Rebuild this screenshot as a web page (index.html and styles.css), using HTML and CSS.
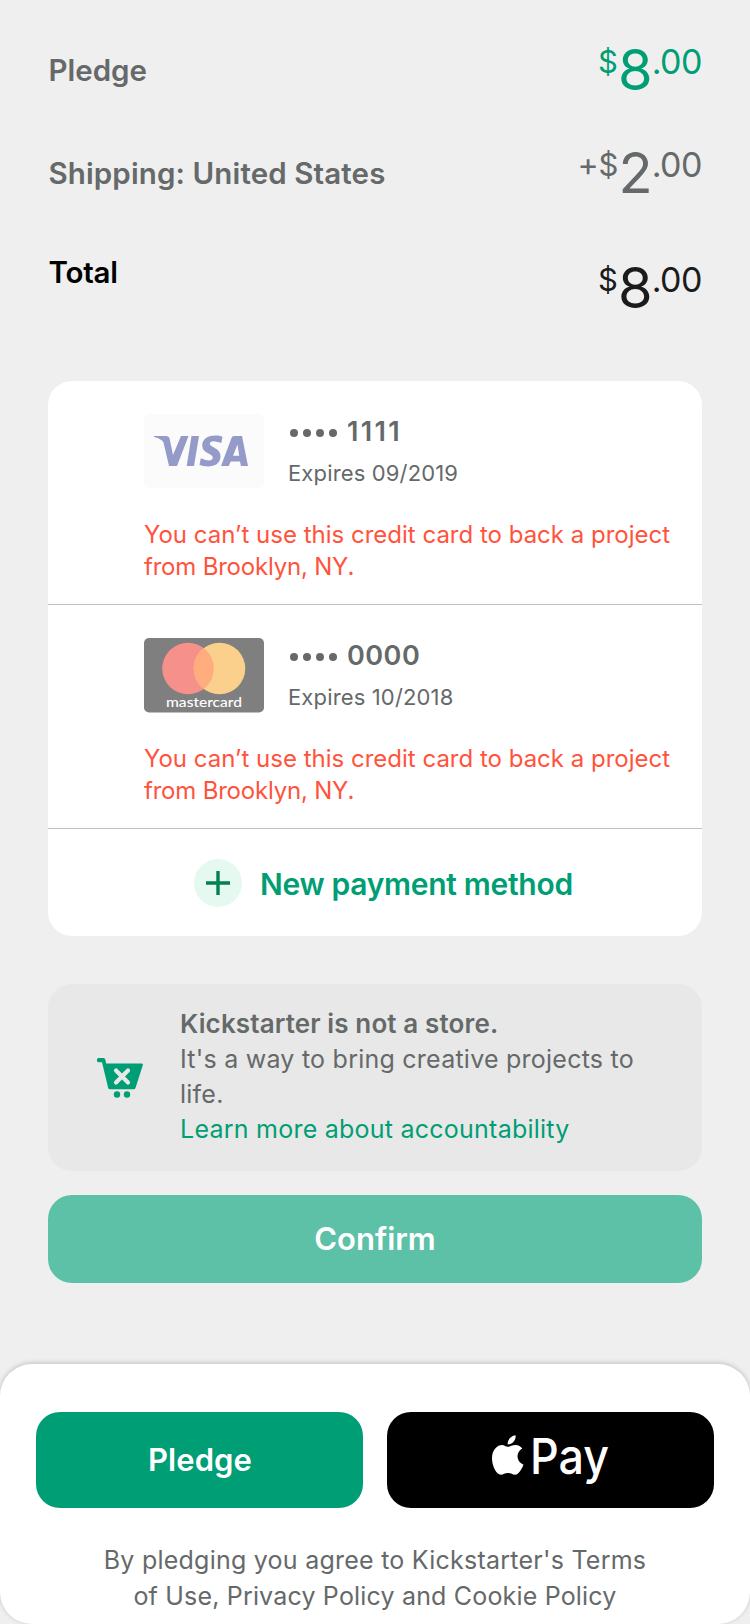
FILE: index.html
```html
<!DOCTYPE html>
<html lang="en">
<head>
<meta charset="utf-8">
<title>Pledge</title>
<link rel="stylesheet" href="styles.css">
</head>
<body>
<main class="content">
  <section class="summary">
    <div class="summary-row">
      <span class="label">Pledge</span>
      <span class="amount green"><span class="small cur">$</span><span class="big">8</span><span class="small dec">.00</span></span>
    </div>
    <div class="summary-row">
      <span class="label label-ship">Shipping: United States</span>
      <span class="amount"><span class="small plus">+</span><span class="small cur">$</span><span class="big">2</span><span class="small dec">.00</span></span>
    </div>
    <div class="summary-row total">
      <span class="label label-total">Total</span>
      <span class="amount black"><span class="small cur">$</span><span class="big">8</span><span class="small dec">.00</span></span>
    </div>
  </section>

  <section class="cards">
    <article class="card">
      <div class="card-head">
        <svg class="brand" viewBox="0 0 120 75">
          <rect width="120" height="74" rx="5" fill="#fbfbfb"/>
          <g fill="#959bc9">
            <path d="M10 22H22.500Q25 22 25.600 24.500L29 41L37 22H44.500L33 52H25L19.500 28.500Q18 25 10 23Z"/>
            <path d="M47.500 22H55L50 52H42.700Z"/>
            <path d="M78.500 22.800L77.300 29Q66 25.200 65.800 30C65.800 33 76.500 34 76.500 42C76.500 54 62 53.500 55.500 50.800L56.800 44.300Q68.500 49 68.800 43.500C68.800 39.500 58.200 39.500 58.200 31.500C58.200 21 72 20 78.500 22.800Z"/>
            <path fill-rule="evenodd" d="M90 22H98L104 52H97L96 47.500H86.700L84.800 52H77L87.500 24Q88.200 22 90 22ZM93.500 30.500L89 41.800H95.200Z"/>
          </g>
        </svg>
        <div class="card-info">
          <div class="number"><i></i><i></i><i></i><i></i><span class="ones">1111</span></div>
          <div class="expires">Expires 09/2019</div>
        </div>
      </div>
      <p class="error">You can’t use this credit card to back a project<br><span class="error-place">from Brooklyn, NY.</span></p>
    </article>
    <article class="card">
      <div class="card-head">
        <svg class="brand" viewBox="0 0 120 75">
          <rect width="120" height="74.500" rx="5" fill="#7f7f7f"/>
          <circle cx="44" cy="30.500" r="25.800" fill="#f6908b"/>
          <circle cx="75.500" cy="30.500" r="25.800" fill="#fbcf8c"/>
          <path d="M59.750 10A25.800 25.800 0 0 1 59.750 51A25.800 25.800 0 0 1 59.750 10Z" fill="#ffad7e"/>
          <text x="22" y="69" textLength="76" lengthAdjust="spacingAndGlyphs" class="mc">mastercard</text>
        </svg>
        <div class="card-info">
          <div class="number"><i></i><i></i><i></i><i></i><span>0000</span></div>
          <div class="expires">Expires 10/2018</div>
        </div>
      </div>
      <p class="error">You can’t use this credit card to back a project<br><span class="error-place">from Brooklyn, NY.</span></p>
    </article>
    <div class="add">
      <svg class="add-icon" viewBox="0 0 48 48">
        <circle cx="24" cy="24" r="24" fill="#e5f9f1"/>
        <path d="M24 12V36M12 24H36" stroke="#037f56" stroke-width="3.400"/>
      </svg>
      <span class="add-label">New payment method</span>
    </div>
  </section>

  <section class="notice">
    <svg class="cart" viewBox="0 0 46 40">
      <path fill="#009e74" d="M1.900 0H6.500Q7.900 0 8.300 1.500L9.200 5.500H44.500Q46.500 5.700 45.700 7.500L38.500 30Q38 31.300 36.500 31.300H13Q11.500 31.300 11.200 30L5 4.200H1.900A2.100 2.100 0 0 1 1.900 0Z"/>
      <circle cx="20" cy="36.500" r="3.200" fill="#009e74"/>
      <circle cx="30" cy="36.500" r="3.200" fill="#009e74"/>
      <path d="M19 12.500L31 24.500M31 12.500L19 24.500" stroke="#e8e8e8" stroke-width="4.200" stroke-linecap="round"/>
    </svg>
    <div class="notice-text">
      <strong>Kickstarter is not a store.</strong><br>
      It's a way to bring creative projects to<br>life.<br>
      <a>Learn more about accountability</a>
    </div>
  </section>

  <div class="button confirm">Confirm</div>
</main>

<footer class="sheet">
  <div class="buttons">
    <div class="button pledge">Pledge</div>
    <div class="button apple">
      <svg width="130" height="80" viewBox="0 -12 130 80">
        <path fill="#fff" d="M17.500 13.800C19.800 13.800 22.200 11.900 25.500 11.900C28.500 11.900 31 13.500 32.300 15.500C25.200 19.600 26.400 28.800 33.500 31.500C32.300 35.200 28.600 41.700 25.100 41.700C22.300 41.700 21.300 40 17.900 40C14.500 40 13.500 41.700 10.900 41.700C6.200 41.700 2 32.500 2 25.500C2 16.500 7.500 12 12 12C14.500 12 16 13.800 17.500 13.800ZM17.700 11.500C17.300 6.500 21.500 2.700 25.600 2.300C26.100 7.200 22.300 11.400 17.700 11.500Z"/>
        <text x="40" y="41" class="pay" textLength="79" lengthAdjust="spacingAndGlyphs">Pay</text>
      </svg>
    </div>
  </div>
  <p class="legal"><span class="legal-1">By pledging you agree to Kickstarter's Terms</span><br><span class="legal-2">of Use, Privacy Policy and Cookie Policy</span></p>
</footer>
</body>
</html>
```
FILE: styles.css
```css
* { box-sizing: border-box; }
body {
  margin: 0;
  width: 750px;
  height: 1624px;
  overflow: hidden;
  display: flex;
  flex-direction: column;
  justify-content: space-between;
  background: #efefef;
  color: #656969;
  font-family: Inter, "Liberation Sans", sans-serif;
  white-space: nowrap;
}
.content { padding: 39px 48px 0; }

.summary { display: flex; flex-direction: column; gap: 43px; }
.summary-row { display: flex; justify-content: space-between; align-items: center; height: 60px; }
.summary-row.total { align-items: flex-start; margin-top: 12px; }
.label { font-size: 29.5px; line-height: 36px; font-weight: 600; margin: 1px 0 0 0.5px; letter-spacing: 0; }
.label-ship { letter-spacing: 0.12px; }
.label-total { color: #000; margin-top: -3px; letter-spacing: -0.2px; }
.amount { display: flex; align-items: flex-start; height: 60px; }
.big { font-size: 56px; line-height: 60px; letter-spacing: -1px; margin-top: 1px; }
.small { font-size: 34px; line-height: 36px; margin-top: 5px; }
.plus { font-size: 32px; }
.cur { font-size: 31px; margin-top: 5px; }
.dec { letter-spacing: -0.5px; }
.green { color: #009e74; }
.black { color: #1b1b1b; }

.cards { margin-top: 64px; height: 555px; border-radius: 24px; background: #fff; }
.card { height: 224px; padding: 33px 0 0 96px; border-bottom: 1px solid #bfbfbf; }
.card-head { display: flex; gap: 24px; height: 75px; }
.brand { width: 120px; height: 75px; }
.mc { font: 500 14px Lato, sans-serif; fill: #fff; }
.number { display: flex; align-items: center; height: 36px; margin-left: -1px; font-size: 27px; line-height: 34px; font-weight: 600; }
.number i { width: 8px; height: 8px; border-radius: 4px; background: #656969; margin: 2px 2.500px 0; }
.number span { margin-left: 8px; letter-spacing: 0.5px; }
.number .ones { letter-spacing: 2.3px; }
.expires { font-size: 22px; line-height: 28px; margin-top: 9px; letter-spacing: 0.15px; }
.error { margin: 30px 0 0; font-size: 24px; line-height: 32px; color: #ff533d; }
.error-place { letter-spacing: -0.2px; }
.add { display: flex; align-items: center; height: 107px; padding-left: 146px; gap: 18px; font-size: 30px; font-weight: 600; color: #009e74; letter-spacing: -0.3px; }
.add-icon { width: 48px; height: 48px; }
.add-label { padding-top: 2px; }

.notice { margin-top: 48px; height: 187px; border-radius: 24px; background: #e8e8e8; display: flex; align-items: center; padding-left: 49px; gap: 37px; }
.cart { width: 46px; height: 40px; flex: none; }
.notice-text { font-size: 25px; line-height: 35px; letter-spacing: 0.24px; padding-bottom: 2px; }
.notice-text strong { font-weight: 600; font-size: 26px; line-height: 1; letter-spacing: 0.13px; }
.notice-text a { color: #009e74; }

.button { border-radius: 24px; color: #fff; font-weight: 600; font-size: 31px; display: flex; align-items: center; justify-content: center; padding-bottom: 2px; }
.confirm { height: 88px; margin-top: 24px; background: #5dc1a8; }

.sheet { height: 260px; border-radius: 32px; background: #fff; padding: 48px 36px 0; box-shadow: 0 -1px 5px rgba(0, 0, 0, 0.2); }
.buttons { display: grid; grid-template-columns: 1fr 1fr; gap: 24px; height: 96px; }
.pledge { background: #009e74; letter-spacing: 0.1px; padding-left: 1px; }
.apple { background: #000; padding: 2px 0 0 9px; }
.pay { font: 500 49px Inter, sans-serif; fill: #fff; }
.legal { margin: 34px 0 0; text-align: center; font-size: 25px; line-height: 36px; }
.legal-1 { letter-spacing: 0.24px; }
.legal-2 { letter-spacing: 0.18px; }
```
